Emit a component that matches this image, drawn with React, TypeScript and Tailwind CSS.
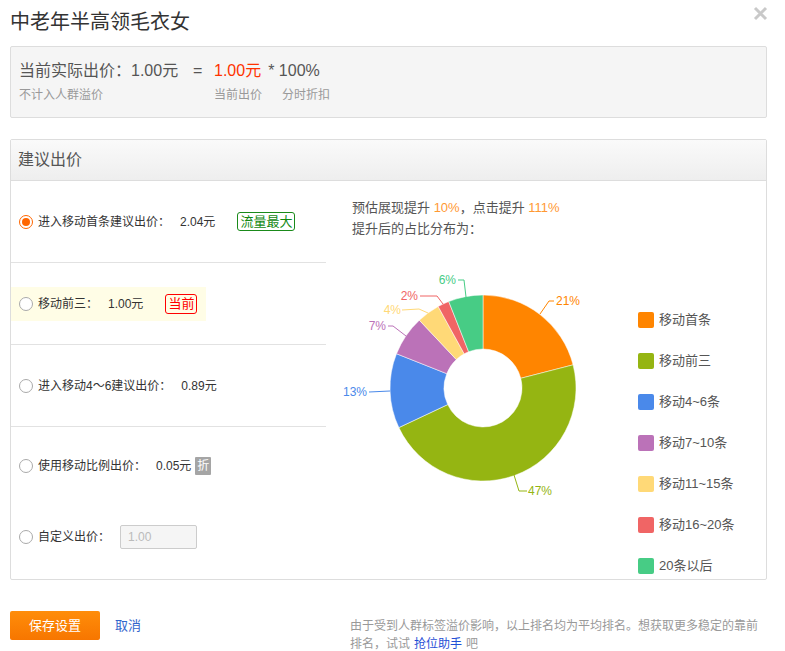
import React from 'react';

const font = { fontFamily: '"Liberation Sans", "Noto Sans CJK SC", sans-serif' };

const slices = [
  { label: '移动首条', pct: 21, color: '#ff8500' },
  { label: '移动前三', pct: 47, color: '#95b512' },
  { label: '移动4~6条', pct: 13, color: '#4a89ea' },
  { label: '移动7~10条', pct: 7, color: '#bb72b8' },
  { label: '移动11~15条', pct: 4, color: '#ffd977' },
  { label: '移动16~20条', pct: 2, color: '#f06565' },
  { label: '20条以后', pct: 6, color: '#47cc85' },
];

// leader lines + label positions, in svg coords
const labels = [
  { pts: '209,64 218,51 223,51', x: 225, y: 55, anchor: 'start' },
  { pts: '183,225 188,241 196,241', x: 197, y: 245, anchor: 'start' },
  { pts: '59,141 38,142', x: 36, y: 146, anchor: 'end' },
  { pts: '75,86 62,76 57,76', x: 55, y: 80, anchor: 'end' },
  { pts: '97,63 88,59 71,60', x: 70, y: 64, anchor: 'end' },
  { pts: '112,54 106,46 89,46', x: 87, y: 50, anchor: 'end' },
  { pts: '135,47 133,30 127,30', x: 125, y: 34, anchor: 'end' },
];

const cx = 152;
const cy = 138;
const R = 93;
const r = 39;

function pt(rad: number, deg: number) {
  const a = (deg * Math.PI) / 180;
  return [cx + rad * Math.sin(a), cy - rad * Math.cos(a)];
}

function slicePath(a0: number, a1: number) {
  const large = a1 - a0 > 180 ? 1 : 0;
  const [x0, y0] = pt(R, a0);
  const [x1, y1] = pt(R, a1);
  const [x2, y2] = pt(r, a1);
  const [x3, y3] = pt(r, a0);
  return `M${x0} ${y0} A${R} ${R} 0 ${large} 1 ${x1} ${y1} L${x2} ${y2} A${r} ${r} 0 ${large} 0 ${x3} ${y3} Z`;
}

const Donut: React.FC = () => {
  let acc = 0;
  return (
    <svg width="300" height="270" viewBox="0 0 300 270">
      {slices.map((s) => {
        const a0 = (acc / 100) * 360;
        acc += s.pct;
        const a1 = (acc / 100) * 360;
        return <path key={s.label} d={slicePath(a0, a1)} fill={s.color} stroke="#fff" strokeWidth="0.5" />;
      })}
      {labels.map((l, i) => (
        <g key={i}>
          <polyline points={l.pts} fill="none" stroke={slices[i].color} strokeWidth="1" />
          <text x={l.x} y={l.y} textAnchor={l.anchor as 'start' | 'end'} fontSize="12" fill={slices[i].color} style={font}>
            {slices[i].pct}%
          </text>
        </g>
      ))}
    </svg>
  );
};

const Radio: React.FC<{ checked?: boolean }> = ({ checked }) =>
  checked ? (
    <span className="w-[14px] h-[14px] rounded-full border border-[#f60] flex items-center justify-center shrink-0 bg-white">
      <span className="w-[8px] h-[8px] rounded-full bg-[#f60]" />
    </span>
  ) : (
    <span className="w-[14px] h-[14px] rounded-full border border-[#aaa] shrink-0 bg-white" />
  );

const App: React.FC = () => {
  return (
    <div className="w-[785px] h-[651px] bg-white text-[#333] px-[10px] relative" style={font}>
      {/* close */}
      <svg className="absolute left-[753px] top-[6px]" width="15" height="15" viewBox="0 0 15 15">
        <path d="M2 2 L13 13 M13 2 L2 13" stroke="#c9c9c9" strokeWidth="3" />
      </svg>

      <h1 className="pt-[8px] text-[20px] leading-[28px] text-[#333] font-normal">中老年半高领毛衣女</h1>

      {/* current price box */}
      <div className="mt-[10px] w-[757px] h-[72px] bg-[#f5f5f5] border border-[#ddd] rounded-[2px] pl-[8px] pt-[12px]">
        <div className="flex text-[16px] leading-[24px] text-[#555]">
          <span className="w-[174px]">当前实际出价：1.00元</span>
          <span className="w-[21px]">=</span>
          <span className="text-[#ff3300]">1.00元</span>
          <span className="ml-[7px]">* 100%</span>
        </div>
        <div className="flex text-[12px] leading-[18px] text-[#999] mt-[3px]">
          <span className="w-[195px]">不计入人群溢价</span>
          <span className="w-[68px]">当前出价</span>
          <span>分时折扣</span>
        </div>
      </div>

      {/* suggested bids card */}
      <div className="mt-[21px] w-[757px] border border-[#ddd] rounded-[2px]">
        <div className="h-[41px] bg-gradient-to-b from-[#fafafa] to-[#eeeeee] border-b border-[#ddd] pl-[7px] flex items-center text-[16px] text-[#555]">
          建议出价
        </div>
        <div className="flex h-[398px]">
          {/* options */}
          <div className="w-[315px] text-[12px] text-[#333]">
            <div className="h-[82px] border-b border-[#e2e2e2] flex items-center pl-[8px]">
              <Radio checked />
              <span className="ml-[5px]">进入移动首条建议出价：</span>
              <span className="ml-[10px]">2.04元</span>
              <span className="ml-[22px] h-[19px] px-[2px] border border-[#1a8a1a] rounded-[3px] text-[#118811] text-[13px] leading-[17px]">流量最大</span>
            </div>
            <div className="h-[82px] border-b border-[#e2e2e2] flex items-center">
              <div className="w-[195px] h-[34px] bg-[#fffde6] flex items-center pl-[8px]">
                <Radio />
                <span className="ml-[5px]">移动前三：</span>
                <span className="ml-[10px]">1.00元</span>
                <span className="ml-[22px] h-[20px] px-[2px] border border-[#ff0000] rounded-[3px] text-[#ff0000] text-[13px] leading-[18px]">当前</span>
              </div>
            </div>
            <div className="h-[82px] border-b border-[#e2e2e2] flex items-center pl-[8px]">
              <Radio />
              <span className="ml-[5px]">进入移动4～6建议出价：</span>
              <span className="ml-[10px]">0.89元</span>
            </div>
            <div className="h-[78px] flex items-center pl-[8px]">
              <Radio />
              <span className="ml-[5px]">使用移动比例出价：</span>
              <span className="ml-[10px]">0.05元</span>
              <span className="ml-[4px] w-[16px] h-[18px] bg-[#a5a5a5] text-white text-[12px] leading-[18px] text-center rounded-[1px]">折</span>
            </div>
            <div className="h-[64px] flex items-center pl-[8px]">
              <Radio />
              <span className="ml-[5px]">自定义出价：</span>
              <div className="ml-[10px] w-[77px] h-[24px] bg-[#f5f5f5] border border-[#ccc] rounded-[2px] pl-[7px] text-[#bbb] leading-[22px]">
                1.00
              </div>
            </div>
          </div>

          {/* chart */}
          <div className="flex-1 pt-[16px]">
            <div className="pl-[26px] text-[13px] leading-[21px] text-[#555]">
              <div>
                预估展现提升 <span className="text-[#ff9933]">10%</span>，点击提升 <span className="text-[#ff9933]">111%</span>
              </div>
              <div>提升后的占比分布为：</div>
            </div>
            <div className="flex mt-[11px]">
              <div className="ml-[5px]">
                <Donut />
              </div>
              <div className="ml-[7px] mt-[62px] flex flex-col">
                {slices.map((s) => (
                  <div key={s.label} className="h-[41px] flex items-start">
                    <span className="w-[16px] h-[16px] rounded-[2px]" style={{ backgroundColor: s.color }} />
                    <span className="ml-[5px] text-[13px] leading-[16px] text-[#555]">{s.label}</span>
                  </div>
                ))}
              </div>
            </div>
          </div>
        </div>
      </div>

      {/* footer */}
      <div className="flex items-start pt-[31px]">
        <div className="w-[340px] flex items-center">
          <button className="w-[90px] h-[29px] rounded-[2px] bg-gradient-to-b from-[#ff8d0a] to-[#f77600] text-white text-[13px]">
            保存设置
          </button>
          <a className="ml-[15px] text-[13px] text-[#3366cc]">取消</a>
        </div>
        <div className="mt-[6px] w-[414px] text-[12px] leading-[18px] text-[#999]">
          <div>由于受到人群标签溢价影响，以上排名均为平均排名。想获取更多稳定的靠前</div>
          <div className="flex">
            <span>排名，试试</span>
            <a className="ml-[4px] text-[#1f4fd6]">抢位助手</a>
            <span className="ml-[4px]">吧</span>
          </div>
        </div>
      </div>
    </div>
  );
};

export default App;
